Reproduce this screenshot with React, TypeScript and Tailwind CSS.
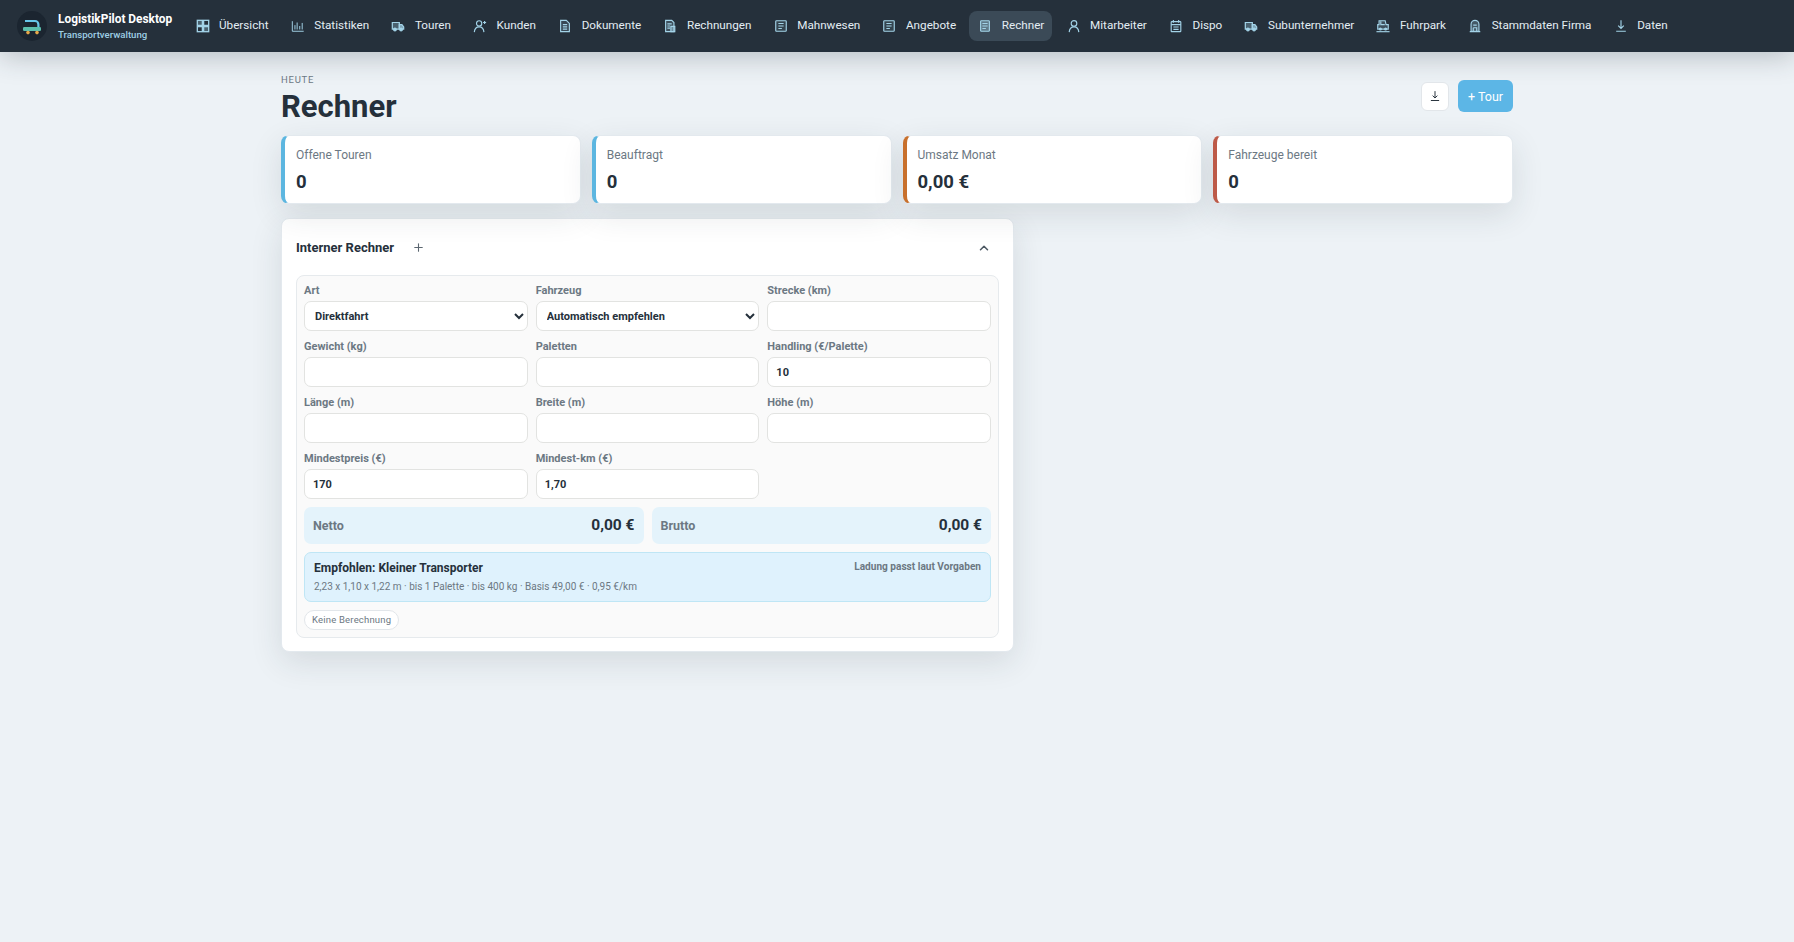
import { ChevronUp, Plus } from "lucide-react";
import type { ReactNode } from "react";

const ic = "h-[14px] w-[14px] text-[#a3d3e8]";

function Svg({ children, sw = 1.3 }: { children: ReactNode; sw?: number }) {
  return (
    <svg viewBox="0 0 16 16" className={ic} fill="none" stroke="currentColor" strokeWidth={sw}>
      {children}
    </svg>
  );
}

function GridIcon() {
  return (
    <Svg sw={1.5}>
      <rect x="1.5" y="1.5" width="5.8" height="5.8" fill="currentColor" fillOpacity="0.3" />
      <rect x="8.7" y="1.5" width="5.8" height="5.8" />
      <rect x="1.5" y="8.7" width="5.8" height="5.8" />
      <rect x="8.7" y="8.7" width="5.8" height="5.8" fill="currentColor" fillOpacity="0.3" />
    </Svg>
  );
}

function ChartIcon() {
  return (
    <Svg sw={1.1}>
      <path d="M1.5 2.5v11.5h13" />
      <path d="M4.5 12V7M7 12V4M10 12V8M12.8 12V4.5" />
    </Svg>
  );
}

function TruckIcon() {
  return (
    <Svg sw={1.4}>
      <path d="M1.5 4h8v7.5h-8z" fill="currentColor" fillOpacity="0.3" />
      <path d="M9.5 6.5h3l2 2.5v2.5h-5z" fill="currentColor" fillOpacity="0.7" />
      <circle cx="4.5" cy="12" r="1.5" fill="currentColor" />
      <circle cx="11.5" cy="12" r="1.5" fill="currentColor" />
    </Svg>
  );
}

function CustomerIcon() {
  return (
    <Svg>
      <circle cx="7" cy="5" r="3" />
      <path d="M1.5 15c.3-3.8 2.6-6 5.5-6s5.2 2.2 5.5 6" />
      <path d="M11.5 4h3.5M13.25 2.3v3.4" />
    </Svg>
  );
}

function UserIcon() {
  return (
    <Svg>
      <circle cx="8" cy="5" r="3.2" />
      <path d="M2.5 15c.3-3.8 2.5-6 5.5-6s5.2 2.2 5.5 6" />
    </Svg>
  );
}

function DocIcon() {
  return (
    <Svg>
      <path d="M3 1.5h6.5L13 5v9.5H3z" fill="currentColor" fillOpacity="0.15" />
      <path d="M5.5 6.5h5M5.5 9h5M5.5 11.5h5" />
    </Svg>
  );
}

function LinesIcon({ tall }: { tall?: boolean }) {
  return (
    <Svg>
      <rect x={tall ? 3 : 2} y="2" width={tall ? 10 : 12} height="12" rx="0.8" fill="currentColor" fillOpacity={tall ? 0.35 : 0.12} />
      <path d="M5 5.2h6M5 8h6M5 10.8h4" />
    </Svg>
  );
}

function BillIcon() {
  return (
    <Svg>
      <path d="M3 1.5h7l2.5 2.5v10.5H3z" fill="currentColor" fillOpacity="0.2" />
      <path d="M5 5.5h5M5 8h3M5 10.5h3" />
      <path d="M9 8.5h4.5v6H9z" fill="currentColor" fillOpacity="0.45" />
    </Svg>
  );
}

function DispoIcon() {
  return (
    <Svg>
      <rect x="2.5" y="3" width="11" height="11.5" rx="0.8" />
      <path d="M5 1v3.2M11 1v3.2M2.5 6.5h11M5 9.2h6M5 11.8h6" />
    </Svg>
  );
}

function ParkIcon() {
  return (
    <Svg>
      <path d="M3.5 2h7l1 4.5H14v5H2v-5h1.5z" fill="currentColor" fillOpacity="0.2" />
      <path d="M5.5 2.5v4H10" />
      <path d="M.5 14.5h15" />
      <circle cx="5" cy="11.5" r="1.1" fill="currentColor" />
      <circle cx="11" cy="11.5" r="1.1" fill="currentColor" />
    </Svg>
  );
}

function FirmIcon() {
  return (
    <Svg>
      <path d="M3.5 14V6a4.5 4.5 0 0 1 9 0v8z" fill="currentColor" fillOpacity="0.25" />
      <path d="M6 7h4M6 10h4v4M6 10v4M2 14.5h12" />
    </Svg>
  );
}

function ArrowDownIcon({ className }: { className?: string }) {
  return (
    <svg viewBox="0 0 16 16" className={className ?? ic} fill="none" stroke="currentColor" strokeWidth="1.3">
      <path d="M8 1.5v9M4.8 7.5 8 10.7l3.2-3.2M2.5 14h11" />
    </svg>
  );
}

const navItems: { label: string; icon: ReactNode; active?: boolean }[] = [
  { label: "Übersicht", icon: <GridIcon /> },
  { label: "Statistiken", icon: <ChartIcon /> },
  { label: "Touren", icon: <TruckIcon /> },
  { label: "Kunden", icon: <CustomerIcon /> },
  { label: "Dokumente", icon: <DocIcon /> },
  { label: "Rechnungen", icon: <BillIcon /> },
  { label: "Mahnwesen", icon: <LinesIcon /> },
  { label: "Angebote", icon: <LinesIcon /> },
  { label: "Rechner", icon: <LinesIcon tall />, active: true },
  { label: "Mitarbeiter", icon: <UserIcon /> },
  { label: "Dispo", icon: <DispoIcon /> },
  { label: "Subunternehmer", icon: <TruckIcon /> },
  { label: "Fuhrpark", icon: <ParkIcon /> },
  { label: "Stammdaten Firma", icon: <FirmIcon /> },
  { label: "Daten", icon: <ArrowDownIcon /> },
];

const stats = [
  { label: "Offene Touren", value: "0", border: "border-l-[#5cb6e0]" },
  { label: "Beauftragt", value: "0", border: "border-l-[#5cb6e0]" },
  { label: "Umsatz Monat", value: "0,00 €", border: "border-l-[#c8702c]" },
  { label: "Fahrzeuge bereit", value: "0", border: "border-l-[#bd5a48]" },
];

const inputClass =
  "h-[30px] w-full rounded-[7px] border border-[#e2e3e1] bg-white px-[8px] text-[11px] font-bold text-[#25303b] outline-none";

function Field({ label, children }: { label: string; children: ReactNode }) {
  return (
    <label className="block">
      <span className="mb-[3px] block h-[15px] text-[11px] leading-[15px] font-bold text-[#6c7883]">{label}</span>
      {children}
    </label>
  );
}

function TextField({ label, value }: { label: string; value?: string }) {
  return (
    <Field label={label}>
      <input className={inputClass} defaultValue={value} />
    </Field>
  );
}

function SelectField({ label, value }: { label: string; value: string }) {
  return (
    <Field label={label}>
      <select className={inputClass + " pl-[6px]"} defaultValue={value}>
        <option>{value}</option>
      </select>
    </Field>
  );
}

function SumBox({ label, value }: { label: string; value: string }) {
  return (
    <div className="flex h-[37px] items-center justify-between rounded-[7px] bg-[#e4f3fb] px-[9px] pt-[1px]">
      <span className="text-[12.5px] font-bold text-[#6c7883]">{label}</span>
      <span className="text-[15.5px] font-bold text-[#25303b]">{value}</span>
    </div>
  );
}

export default function App() {
  return (
    <div className="min-h-screen bg-[#edf2f6] font-['Roboto','Noto_Sans',sans-serif] text-[#25303b]">
      <header className="flex h-[52px] items-center bg-[#25303b] pl-[17px] shadow-[0_4px_28px_rgba(37,48,59,0.28)]">
        <div className="flex h-[30px] w-[30px] items-center justify-center rounded-full bg-[#1b2530]">
          <svg viewBox="0 0 24 24" className="h-[24px] w-[24px]" fill="none">
            <path d="M5 7h10a3.4 3.4 0 0 1 3.4 3.4V13" stroke="#67c6ea" strokeWidth="2.2" />
            <rect x="3" y="13" width="18" height="4" rx="1.2" fill="#5cbfae" />
            <circle cx="8" cy="18.6" r="1.8" fill="#e6a94a" />
            <circle cx="17" cy="18.6" r="1.8" fill="#e6a94a" />
          </svg>
        </div>
        <div className="ml-[11px] w-[128px]">
          <div className="text-[11.9px] leading-[16px] font-bold text-white">LogistikPilot Desktop</div>
          <div className="mt-[1px] text-[9.6px] leading-[13px] font-medium text-[#9fcfe5]">Transportverwaltung</div>
        </div>
        <nav className="flex items-center gap-[4.7px]">
          {navItems.map((item) => (
            <a
              key={item.label}
              className={
                "flex h-[30px] items-center gap-[8px] rounded-[8px] px-[8px] text-[11.7px] whitespace-nowrap text-[#e3edf3] " +
                (item.active ? "bg-[#3b4a57]" : "")
              }
            >
              <span className="flex w-[17px] justify-center">{item.icon}</span>
              {item.label}
            </a>
          ))}
        </nav>
      </header>

      <main className="ml-[281px] w-[1232px]">
        <div className="flex items-start justify-between pt-[21px]">
          <div>
            <div className="text-[9.5px] leading-[13px] tracking-[0.08em] text-[#6c7883] uppercase">Heute</div>
            <h1 className="mt-[1px] text-[31px] leading-[39px] font-bold">Rechner</h1>
          </div>
          <div className="mt-[7px] flex items-center gap-[9px]">
            <button className="flex h-[29px] w-[28px] items-center justify-center rounded-[6px] border border-[#e2e6ea] bg-white">
              <ArrowDownIcon className="h-[12px] w-[12px] text-[#25303b]" />
            </button>
            <button className="h-[32px] w-[55px] rounded-[6px] bg-[#5cb6e6] pt-[2px] text-[12.5px] text-white">+ Tour</button>
          </div>
        </div>

        <section className="mt-[9px] grid grid-cols-4 gap-[11px]">
          {stats.map((s) => (
            <div
              key={s.label}
              className={
                "h-[69px] rounded-[8px] border border-l-4 border-[#e3e9ee] bg-white pt-[11px] pl-[11px] shadow-[0_10px_32px_rgba(37,48,59,0.12)] " +
                s.border
              }
            >
              <div className="text-[12px] leading-[17px] text-[#6c7883]">{s.label}</div>
              <div className="mt-[6px] text-[18.5px] leading-[24px] font-bold">{s.value}</div>
            </div>
          ))}
        </section>

        <section className="mt-[14px] w-[733px] rounded-[8px] border border-[#e3e9ee] bg-white px-[14px] pb-[13px] shadow-[0_10px_32px_rgba(37,48,59,0.12)]">
          <div className="flex h-[56px] items-center pt-[1px]">
            <h2 className="text-[13px] font-bold">Interner Rechner</h2>
            <button className="ml-[12px] flex h-[24px] w-[24px] items-center justify-center">
              <Plus className="h-[13px] w-[13px] text-[#5b6670]" strokeWidth={2} />
            </button>
            <button className="mr-[3px] ml-auto flex h-[24px] w-[24px] items-center justify-center">
              <ChevronUp className="h-[14px] w-[14px] text-[#4d5963]" strokeWidth={2.6} />
            </button>
          </div>

          <div className="rounded-[8px] border border-[#e6eaed] bg-[#fafafa] px-[7px] pt-[7px] pb-[7px]">
            <div className="grid grid-cols-3 gap-x-[8px] gap-y-[8px]">
              <SelectField label="Art" value="Direktfahrt" />
              <SelectField label="Fahrzeug" value="Automatisch empfehlen" />
              <TextField label="Strecke (km)" />
              <TextField label="Gewicht (kg)" />
              <TextField label="Paletten" />
              <TextField label="Handling (€/Palette)" value="10" />
              <TextField label="Länge (m)" />
              <TextField label="Breite (m)" />
              <TextField label="Höhe (m)" />
              <TextField label="Mindestpreis (€)" value="170" />
              <TextField label="Mindest-km (€)" value="1,70" />
            </div>

            <div className="mt-[8px] grid grid-cols-2 gap-[8px]">
              <SumBox label="Netto" value="0,00 €" />
              <SumBox label="Brutto" value="0,00 €" />
            </div>

            <div className="mt-[8px] flex h-[50px] items-start justify-between rounded-[7px] border border-[#bfe6f5] bg-[#dff2fd] px-[9px] pt-[7px]">
              <div>
                <div className="text-[12px] leading-[16px] font-bold">Empfohlen: Kleiner Transporter</div>
                <div className="mt-[4px] text-[10px] leading-[14px] text-[#6c7883]">
                  2,23 x 1,10 x 1,22 m · bis 1 Palette · bis 400 kg · Basis 49,00 € · 0,95 €/km
                </div>
              </div>
              <div className="text-[10.1px] leading-[14px] font-bold text-[#6c7883]">Ladung passt laut Vorgaben</div>
            </div>

            <div className="mt-[8px] inline-flex h-[20px] items-center rounded-full border border-[#e2e6ea] bg-white px-[7px] text-[9.5px] tracking-[0.02em] text-[#6c7883]">
              Keine Berechnung
            </div>
          </div>
        </section>
      </main>
    </div>
  );
}
